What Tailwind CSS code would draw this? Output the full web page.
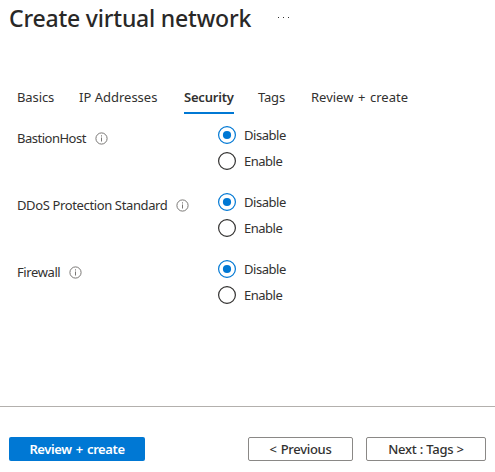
<!DOCTYPE html>
<html lang="en">
<head>
<meta charset="utf-8">
<title>Create virtual network</title>
<script src="https://cdn.jsdelivr.net/npm/@tailwindcss/browser@4"></script>
</head>
<body class="bg-white">
<main class="flex h-[472px] w-[495px] flex-col overflow-hidden bg-white font-['Noto_Sans','Open_Sans',sans-serif] text-[13px] leading-[18px] text-[#323130]">
  <header class="flex h-[85px] items-start pl-[9px]">
    <h1 class="w-[242px] whitespace-nowrap text-[23px] leading-9 font-medium tracking-[-0.2px] text-[#292827]">Create virtual network</h1>
    <button class="mt-[17px] ml-[27px] flex gap-[4px]" aria-label="More">
      <i class="size-px bg-[#323130]"></i><i class="size-px bg-[#323130]"></i><i class="size-px bg-[#323130]"></i>
    </button>
  </header>
  <nav class="flex h-[29px] whitespace-nowrap pt-[3px] pl-[17px]">
    <a class="w-[62px] tracking-[-0.1px]">Basics</a>
    <a class="w-[105px] tracking-[0px]">IP Addresses</a>
    <a class="mr-6 w-[50px] border-b-2 border-[#0078d4] font-semibold tracking-[-0.2px]">Security</a>
    <a class="w-[53px] tracking-[-0.2px]">Tags</a>
    <a class="tracking-[0px] [word-spacing:1.2px]">Review + create</a>
  </nav>
  <form class="flex h-[292px] flex-col gap-[23px] pt-[12px] pl-[17px]" id="options"></form>
  <footer class="flex h-[66px] border-t border-[#b3b0ad] pt-[30px] pl-[9px] leading-[22px] font-medium whitespace-nowrap">
    <button class="flex h-6 w-[136px] items-center justify-center rounded-[2px] bg-[#0078d4] pb-px font-semibold tracking-[-0.4px] text-white [word-spacing:1.2px]">Review + create</button>
    <button class="ml-[103px] flex h-6 w-[105px] items-center justify-center rounded-[2px] border border-[#8a8886] pb-px tracking-[-0.3px] [word-spacing:1px]">&lt; Previous</button>
    <button class="ml-[13px] flex h-6 w-[120px] items-center justify-center rounded-[2px] border border-[#8a8886] pb-px tracking-[-0.3px] [word-spacing:0.3px]">Next : Tags &gt;</button>
  </footer>
</main>
<template id="row">
  <fieldset class="flex h-[44px] items-start">
    <div class="mt-[3px] flex w-[201px] items-center gap-2 whitespace-nowrap">
      <span data-label></span>
      <svg class="size-[13px] text-[#797775]" viewBox="0 0 13 13" fill="none" stroke="currentColor"><circle cx="6.5" cy="6.5" r="5.6"/><path d="M6.5 5.5v4M6.5 3.3v1.2"/></svg>
    </div>
    <div class="flex flex-col gap-2">
      <label class="flex h-[18px] items-center gap-2"><svg class="size-[18px]" viewBox="0 0 18 18"><circle cx="9" cy="9" r="8.4" fill="#fff" stroke="#0078d4" stroke-width="1.2"/><circle cx="9" cy="9" r="4.1" fill="#0078d4"/></svg><span class="tracking-[-0.45px]">Disable</span></label>
      <label class="flex h-[18px] items-center gap-2"><svg class="size-[18px]" viewBox="0 0 18 18"><circle cx="9" cy="9" r="8.4" fill="#fff" stroke="#323130" stroke-width="1.2"/></svg><span class="tracking-[-0.5px]">Enable</span></label>
    </div>
  </fieldset>
</template>
<script>
for (const [name, style] of [["BastionHost", "w-[70px] tracking-[-0.5px]"], ["DDoS Protection Standard", "w-[151px] tracking-[-0.37px]"], ["Firewall", "w-[44px] tracking-[-0.4px]"]]) {
  const row = document.getElementById("row").content.cloneNode(true);
  const label = row.querySelector("[data-label]");
  label.textContent = name;
  label.className = style;
  document.getElementById("options").append(row);
}
</script>
</body>
</html>
